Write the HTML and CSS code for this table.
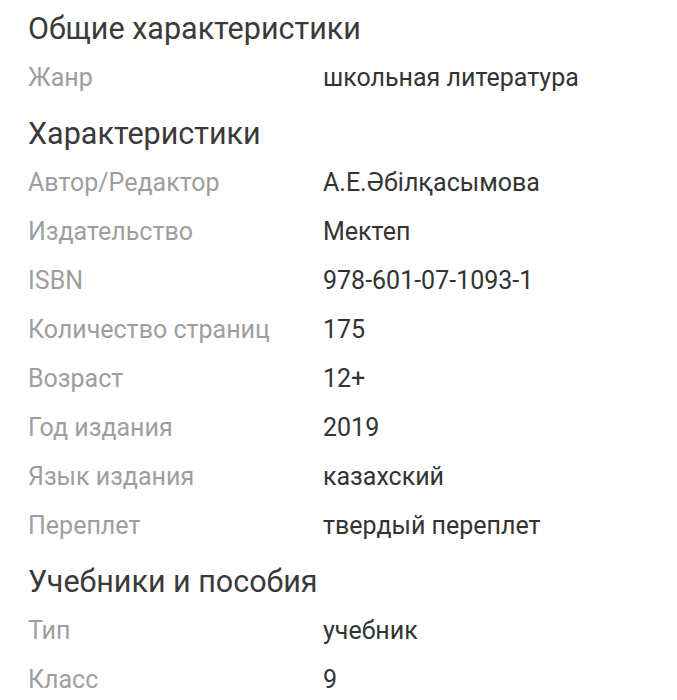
FILE: index.html
```html
<!DOCTYPE html>
<html lang="ru">
<head>
<meta charset="utf-8">
<link rel="stylesheet" href="styles.css">
</head>
<body>
<div class="specs">
  <h2 class="section-title">Общие характеристики</h2>
  <div class="row"><span class="label">Жанр</span><span class="value">школьная литература</span></div>

  <h2 class="section-title gap">Характеристики</h2>
  <div class="row"><span class="label">Автор/Редактор</span><span class="value">А.Е.Әбілқасымова</span></div>
  <div class="row"><span class="label">Издательство</span><span class="value">Мектеп</span></div>
  <div class="row"><span class="label">ISBN</span><span class="value">978-601-07-1093-1</span></div>
  <div class="row"><span class="label">Количество страниц</span><span class="value">175</span></div>
  <div class="row"><span class="label">Возраст</span><span class="value">12+</span></div>
  <div class="row"><span class="label">Год издания</span><span class="value">2019</span></div>
  <div class="row"><span class="label">Язык издания</span><span class="value">казахский</span></div>
  <div class="row"><span class="label">Переплет</span><span class="value">твердый переплет</span></div>

  <h2 class="section-title gap">Учебники и пособия</h2>
  <div class="row"><span class="label">Тип</span><span class="value">учебник</span></div>
  <div class="row"><span class="label">Класс</span><span class="value">9</span></div>
</div>
</body>
</html>
```
FILE: styles.css
```css
html, body {
  margin: 0;
  padding: 0;
  background: #ffffff;
}
body {
  font-family: Roboto, "Noto Sans", sans-serif;
}
.specs {
  padding: 4px 0 0 28px;
}
.section-title {
  margin: 0;
  font-size: 30.5px;
  font-weight: 400;
  line-height: 49px;
  color: #3a3a3a;
}
.section-title.gap {
  margin-top: 7px;
}
.row {
  display: grid;
  grid-template-columns: 295px 1fr;
  font-size: 25px;
  line-height: 49px;
  height: 49px;
}
.label {
  color: #9e9e9e;
}
.value {
  color: #333333;
}
```
